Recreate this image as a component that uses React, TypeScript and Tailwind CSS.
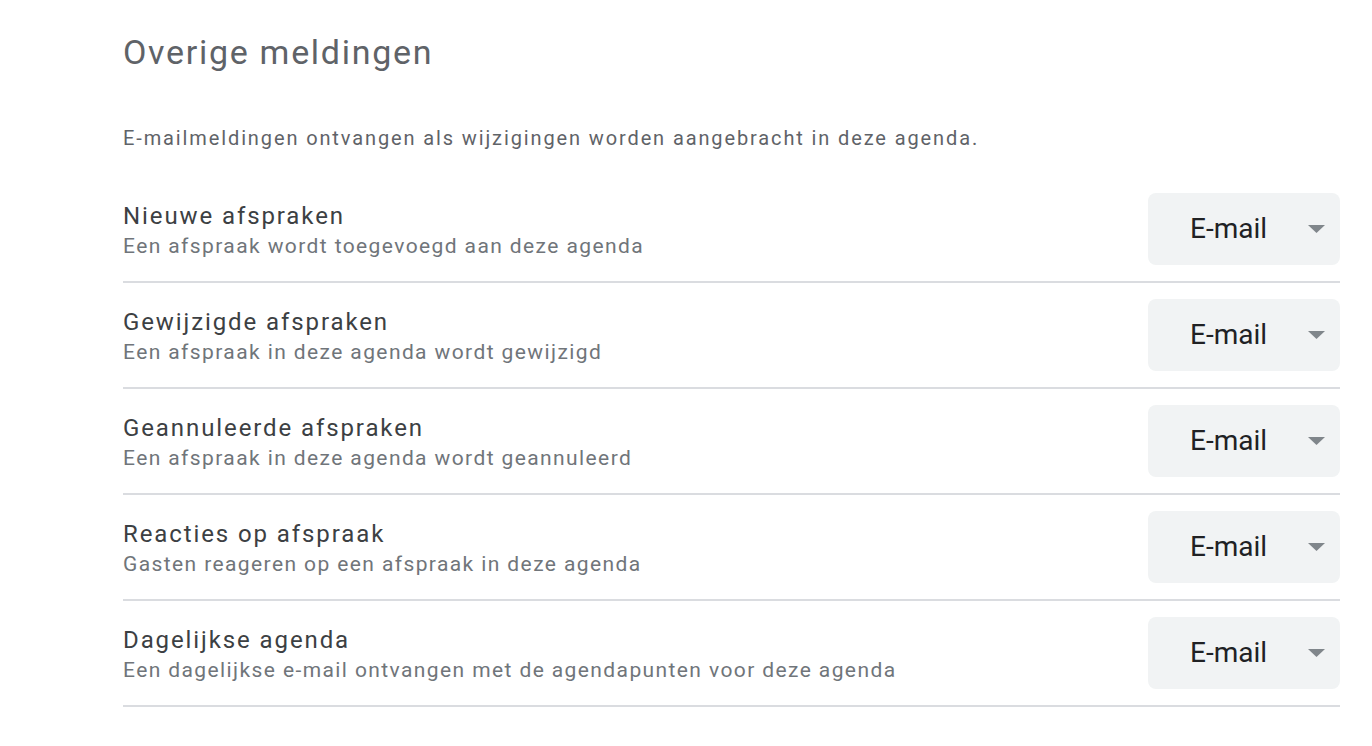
const rows = [
  { title: "Nieuwe afspraken", sub: "Een afspraak wordt toegevoegd aan deze agenda" },
  { title: "Gewijzigde afspraken", sub: "Een afspraak in deze agenda wordt gewijzigd" },
  { title: "Geannuleerde afspraken", sub: "Een afspraak in deze agenda wordt geannuleerd" },
  { title: "Reacties op afspraak", sub: "Gasten reageren op een afspraak in deze agenda" },
  { title: "Dagelijkse agenda", sub: "Een dagelijkse e-mail ontvangen met de agendapunten voor deze agenda" },
];

function Select() {
  return (
    <div className="flex h-[72px] w-[192px] shrink-0 items-center rounded-lg bg-[#f1f3f4] pl-[42px] pr-[15px]">
      <span className="flex-1 text-[28px] text-[#202124]">E-mail</span>
      <svg width="17" height="8" viewBox="0 0 17 8" className="text-[#80868b]">
        <path d="M0 0 L17 0 L8.5 8 Z" fill="currentColor" />
      </svg>
    </div>
  );
}

export default function App() {
  return (
    <div className="min-h-screen bg-white font-['Roboto',sans-serif]">
      <div className="ml-[123px] w-[1217px] pt-[30px]">
        <h2 className="text-[34px] leading-[44px] tracking-[1.7px] text-[#5f6368]">Overige meldingen</h2>
        <p className="mt-[50px] text-[20px] leading-[28px] tracking-[1.88px] text-[#5f6368]">
          E-mailmeldingen ontvangen als wijzigingen worden aangebracht in deze agenda.
        </p>
        <div className="mt-[25px]">
          {rows.map((r) => (
            <div key={r.title} className="flex items-center border-b-2 border-[#dadce0] py-[16px]">
              <div className="flex-1 pt-[4px]">
                <div className="text-[24px] leading-[30px] tracking-[1.9px] text-[#3c4043]">{r.title}</div>
                <div className="text-[21px] leading-[30px] tracking-[1.4px] text-[#70757a]">{r.sub}</div>
              </div>
              <Select />
            </div>
          ))}
        </div>
      </div>
    </div>
  );
}
